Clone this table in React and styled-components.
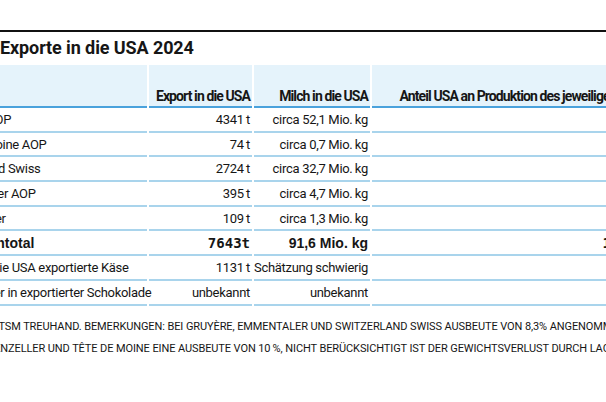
import React from "react";
import styled, { createGlobalStyle } from "styled-components";

const GlobalStyle = createGlobalStyle`
  *, *::before, *::after {
    box-sizing: border-box;
  }
  html, body {
    margin: 0;
    padding: 0;
    background: #fff;
    overflow: hidden;
  }
  body {
    font-family: Roboto, "Liberation Sans", sans-serif;
    color: #161616;
  }
`;

const COLS = "210px 103px 116px 283px";

const rows = [
  ["Gruyère AOP", "4341\u2009t", "circa 52,1 Mio.\u2009kg", "16,8\u2009%"],
  ["Tête de Moine AOP", "74\u2009t", "circa 0,7 Mio.\u2009kg", "3,2\u2009%"],
  ["Switzerland Swiss", "2724\u2009t", "circa 32,7 Mio.\u2009kg", "94,0\u2009%"],
  ["Emmentaler AOP", "395\u2009t", "circa 4,7 Mio.\u2009kg", "2,5\u2009%"],
  ["Appenzeller", "109\u2009t", "circa 1,3 Mio.\u2009kg", "1,1\u2009%"],
];

const extra = [
  ["Übrige in die USA exportierte Käse", "1131\u2009t", "Schätzung schwierig", ""],
  ["Milchpulver in exportierter Schokolade", "unbekannt", "unbekannt", ""],
];

export default function App() {
  return (
    <>
      <GlobalStyle />
      <Page>
        <Rule />
        <Title>Exporte in die USA 2024</Title>
        <Grid>
          <HeadCell />
          <HeadCell>Export in die USA</HeadCell>
          <HeadCell>Milch in die USA</HeadCell>
          <HeadCell>Anteil USA an Produktion des jeweiligen Käses</HeadCell>
          {rows.map((r, i) => (
            <React.Fragment key={i}>
              <Cell>{r[0]}</Cell>
              <Cell $right>{r[1]}</Cell>
              <Cell $right>{r[2]}</Cell>
              <Cell $right>{r[3]}</Cell>
            </React.Fragment>
          ))}
          <Cell $total>Zwischentotal</Cell>
          <Cell $right $mono>7643t</Cell>
          <Cell $right $total>91,6 Mio. kg</Cell>
          <Cell $right $mono>13,6 %</Cell>
          {extra.map((r, i) => (
            <React.Fragment key={i}>
              <Cell>{r[0]}</Cell>
              <Cell $right>{r[1]}</Cell>
              <Cell $right>{r[2]}</Cell>
              <Cell $right>{r[3]}</Cell>
            </React.Fragment>
          ))}
        </Grid>
        <Footnote>
          <span>Quelle: TSM Treuhand. Bemerkungen: Bei Gruyère, Emmentaler und Switzerland Swiss Ausbeute von 8,3% angenommen,</span>
          <span>bei Appenzeller und Tête de Moine eine Ausbeute von 10&#8201;%, nicht berücksichtigt ist der Gewichtsverlust durch Lagerung.</span>
        </Footnote>
      </Page>
    </>
  );
}

const Page = styled.div`
  margin-left: -63px;
  width: 730px;
  padding-top: 30px;
`;

const Rule = styled.div`
  border-top: 2px solid #111;
`;

const Title = styled.h2`
  margin: 6px 0 7px 63px;
  font-size: 18px;
  line-height: 20px;
  font-weight: 700;
  letter-spacing: -0.1px;
`;

const Grid = styled.div`
  display: grid;
  grid-template-columns: ${COLS};
  column-gap: 2px;
`;

const HeadCell = styled.div`
  height: 43px;
  background: #e5f3fb;
  border-bottom: 2px solid #4aa2dc;
  display: flex;
  align-items: flex-end;
  justify-content: flex-end;
  padding: 0 2px 2px 4px;
  font-size: 14px;
  line-height: 16px;
  font-weight: 700;
  letter-spacing: -0.9px;
  white-space: nowrap;
`;

const Cell = styled.div`
  height: 24.7px;
  border-bottom: 2px solid #a9d4ec;
  display: flex;
  align-items: center;
  justify-content: ${(p) => (p.$right ? "flex-end" : "flex-start")};
  padding: 0 2px 0 4px;
  white-space: nowrap;
  font-size: ${(p) => (p.$total || p.$mono ? "14px" : "13px")};
  font-weight: ${(p) => (p.$total || p.$mono ? 700 : 400)};
  font-family: ${(p) =>
    p.$mono
      ? '"DejaVu Sans Mono", monospace'
      : p.$total
      ? '"Liberation Sans", Arial, sans-serif'
      : "Roboto, sans-serif"};
  letter-spacing: ${(p) => (p.$total || p.$mono ? "0" : "-0.3px")};
`;

const Footnote = styled.div`
  margin: 10px 0 0 18px;
  font-size: 11px;
  line-height: 22px;
  text-transform: uppercase;
  letter-spacing: -0.1px;
  span {
    display: block;
    white-space: nowrap;
  }
`;
